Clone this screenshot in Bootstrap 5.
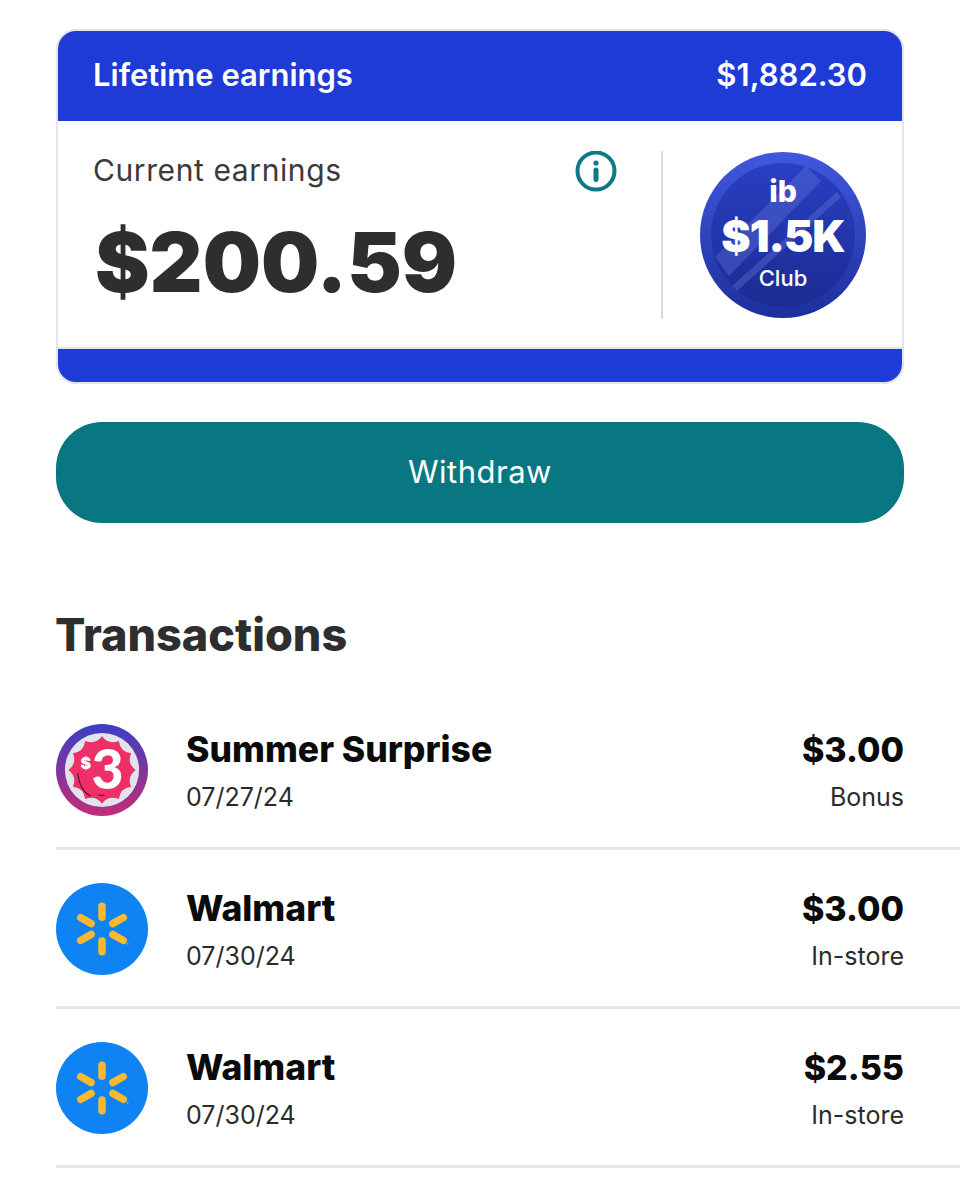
<!DOCTYPE html>
<html lang="en">
<head>
  <meta charset="UTF-8" />
  <meta name="viewport" content="width=device-width, initial-scale=1.0"/>
  <title>Earnings</title>
  <link href="https://cdn.jsdelivr.net/npm/bootstrap@5.3.3/dist/css/bootstrap.min.css" rel="stylesheet"/>
  <script src="https://cdn.jsdelivr.net/npm/bootstrap@5.3.3/dist/js/bootstrap.bundle.min.js"></script>
  <style>
    html, body {
      height: 1200px;
      overflow: hidden;
    }

    body {
      background-color: #fff;
      font-family: Inter, "Open Sans", sans-serif;
      color: #2f2f2f;
      padding-top: 29px;
    }

    .page-pad {
      padding: 0 56px;
    }

    .earn-card {
      border: 2px solid #e4e4ec;
      border-radius: 20px;
      overflow: hidden;
      height: 355px;
    }

    .earn-head {
      background: #1f3bd6;
      color: #fff;
      height: 91px;
      padding: 0 36px;
      font-size: 31px;
      font-weight: 600;
      margin: -1px -1px 0;
    }

    .earn-body {
      height: 228px;
      border-bottom: 2px solid #e4e4ec;
    }

    .earn-left {
      width: 603px;
      padding: 30px 43px 0 35px;
    }

    .earn-label {
      font-size: 30px;
      line-height: 38px;
      letter-spacing: .6px;
      color: #3a3a3a;
    }

    .earn-total {
      font-size: 82px;
      line-height: 100px;
      font-weight: 900;
      margin: 18px 0 0 2px;
      color: #2e2e2e;
    }

    .earn-sep {
      width: 2px;
      height: 168px;
      background: #dcdcdc;
      margin-top: 30px;
    }

    .earn-badge {
      position: relative;
      width: 168px;
      height: 168px;
      margin: 30px 0 0 36px;
    }

    .badge-copy {
      position: absolute;
      inset: 0;
      color: #fff;
      text-align: center;
      padding-top: 22px;
    }

    .badge-ib {
      font-size: 30px;
      line-height: 36px;
      font-weight: 800;
    }

    .badge-sum {
      font-size: 44px;
      line-height: 54px;
      font-weight: 900;
      letter-spacing: -1px;
    }

    .badge-club {
      font-size: 22px;
      line-height: 28px;
      font-weight: 500;
      margin-top: 1px;
    }

    .earn-foot {
      background: #1f3bd6;
      height: 34px;
      margin: 0 -1px;
    }

    .withdraw-btn {
      background: #087781;
      color: #fff;
      border: 0;
      border-radius: 46px;
      height: 101px;
      width: 100%;
      font-size: 31px;
      letter-spacing: .5px;
      margin-top: 38px;
    }

    .withdraw-btn:hover {
      background: #087781;
      color: #fff;
    }

    .tx-title {
      font-size: 45px;
      line-height: 54px;
      font-weight: 800;
      margin: 85px 0 0 -1px;
      color: #2e2e2e;
    }

    .tx-list {
      margin-top: 29px;
    }

    .tx-row {
      height: 159px;
      margin-left: 56px;
      padding: 33px 56px 31px 0;
      border-bottom: 3px solid #e6e6e6;
    }

    .tx-icon {
      width: 92px;
      height: 92px;
      flex-shrink: 0;
      display: block;
    }

    .tx-info {
      margin-left: 38px;
    }

    .tx-name {
      font-size: 35.500px;
      line-height: 44px;
      font-weight: 800;
      color: #0b0b0b;
    }

    .tx-amt {
      font-size: 34px;
      line-height: 44px;
      font-weight: 800;
      color: #0b0b0b;
    }

    .tx-sub {
      font-size: 25px;
      line-height: 32px;
      margin-top: 9px;
      color: #2b2b2b;
    }
  </style>
</head>
<body>
  <svg width="0" height="0" class="d-block position-absolute">
    <defs>
      <g id="spark">
        <circle cx="46.500" cy="46.500" r="46.500" fill="#0f82f4"/>
        <g stroke="#fdb92e" stroke-width="7.500" stroke-linecap="round">
          <path d="M46.500 23.500v11"/>
          <path d="M46.500 58.500v11"/>
          <path d="M25 35l10.500 6"/>
          <path d="M57.500 52l10.500 6"/>
          <path d="M68 35l-10.500 6"/>
          <path d="M35.500 52l-10.500 6"/>
        </g>
        <circle cx="72.500" cy="61.500" r=".8" fill="#fdb92e"/>
      </g>
    </defs>
  </svg>

  <div class="page-pad">
    <div class="earn-card">
      <div class="earn-head d-flex justify-content-between align-items-center">
        <span>Lifetime earnings</span>
        <span>$1,882.30</span>
      </div>
      <div class="earn-body d-flex">
        <div class="earn-left">
          <div class="d-flex justify-content-between align-items-start">
            <span class="earn-label">Current earnings</span>
            <svg width="44" height="44" viewBox="0 0 44 44" aria-hidden="true">
              <circle cx="22" cy="20" r="18.500" fill="none" stroke="#0f7a85" stroke-width="4"/>
              <circle cx="22" cy="12" r="2.600" fill="#0f7a85"/>
              <path d="M22 19v9.500" stroke="#0f7a85" stroke-width="5" stroke-linecap="round"/>
            </svg>
          </div>
          <div class="earn-total">$200.59</div>
        </div>
        <div class="earn-sep"></div>
        <div class="earn-badge">
          <svg width="168" height="168" viewBox="0 0 168 168" class="d-block">
            <defs>
              <linearGradient id="rim" x1="0" y1="0" x2="0" y2="1">
                <stop offset="0" stop-color="#4058dd"/>
                <stop offset="1" stop-color="#1d2f9c"/>
              </linearGradient>
              <linearGradient id="face" x1="0" y1="0" x2="0" y2="1">
                <stop offset="0" stop-color="#2a40c4"/>
                <stop offset="1" stop-color="#1c2c92"/>
              </linearGradient>
              <clipPath id="faceclip"><circle cx="84" cy="84" r="72"/></clipPath>
            </defs>
            <circle cx="84" cy="84" r="83" fill="url(#rim)"/>
            <circle cx="84" cy="84" r="72" fill="url(#face)"/>
            <g clip-path="url(#faceclip)" fill="#6d80de" opacity=".32">
              <path d="M16 106L107 15l15 15L30 125z"/>
              <path d="M33 135L138 41l4 5L38 140z"/>
            </g>
          </svg>
          <div class="badge-copy">
            <div class="badge-ib">ib</div>
            <div class="badge-sum">$1.5K</div>
            <div class="badge-club">Club</div>
          </div>
        </div>
      </div>
      <div class="earn-foot"></div>
    </div>

    <button class="btn withdraw-btn">Withdraw</button>

    <h2 class="tx-title">Transactions</h2>
  </div>

  <div class="tx-list">
    <div class="tx-row d-flex align-items-center">
      <svg class="tx-icon" viewBox="0 0 93 93">
        <defs>
          <linearGradient id="ring" x1="0" y1="0" x2="0" y2="1">
            <stop offset="0" stop-color="#3a3fc4"/>
            <stop offset="1" stop-color="#c22c78"/>
          </linearGradient>
        </defs>
        <circle cx="46.500" cy="46.500" r="46.500" fill="url(#ring)"/>
        <circle cx="46.500" cy="46.500" r="37.500" fill="#e2e4ec"/>
        <path transform="translate(46.500 46.500)" fill="#ee2f68" d="M34 0Q25.100 6.700 29.400 17Q18.400 18.400 17 29.400Q6.700 25.100 0 34Q-6.700 25.100 -17 29.400Q-18.400 18.400 -29.400 17Q-25.100 6.700 -34 0Q-25.100 -6.700 -29.400 -17Q-18.400 -18.400 -17 -29.400Q-6.700 -25.100 0 -34Q6.700 -25.100 17 -29.400Q18.400 -18.400 29.400 -17Q25.100 -6.700 34 0Z"/>
        <path d="M22 50c1 11 6 19 13 23M43 72l6 0" fill="none" stroke="#3a1530" stroke-width="1.100"/>
        <text x="52" y="66" text-anchor="middle" fill="#fff" font-family="Lato, sans-serif" font-weight="900" font-size="56">3</text>
        <text x="30" y="45" text-anchor="middle" fill="#fff" font-family="Inter, sans-serif" font-weight="900" font-size="16">$</text>
      </svg>
      <div class="flex-grow-1 tx-info">
        <div class="tx-name">Summer Surprise</div>
        <div class="tx-sub">07/27/24</div>
      </div>
      <div class="text-end">
        <div class="tx-amt">$3.00</div>
        <div class="tx-sub">Bonus</div>
      </div>
    </div>

    <div class="tx-row d-flex align-items-center">
      <svg class="tx-icon" viewBox="0 0 93 93"><use href="#spark"/></svg>
      <div class="flex-grow-1 tx-info">
        <div class="tx-name">Walmart</div>
        <div class="tx-sub">07/30/24</div>
      </div>
      <div class="text-end">
        <div class="tx-amt">$3.00</div>
        <div class="tx-sub">In-store</div>
      </div>
    </div>

    <div class="tx-row d-flex align-items-center">
      <svg class="tx-icon" viewBox="0 0 93 93"><use href="#spark"/></svg>
      <div class="flex-grow-1 tx-info">
        <div class="tx-name">Walmart</div>
        <div class="tx-sub">07/30/24</div>
      </div>
      <div class="text-end">
        <div class="tx-amt">$2.55</div>
        <div class="tx-sub">In-store</div>
      </div>
    </div>
  </div>
</body>
</html>
